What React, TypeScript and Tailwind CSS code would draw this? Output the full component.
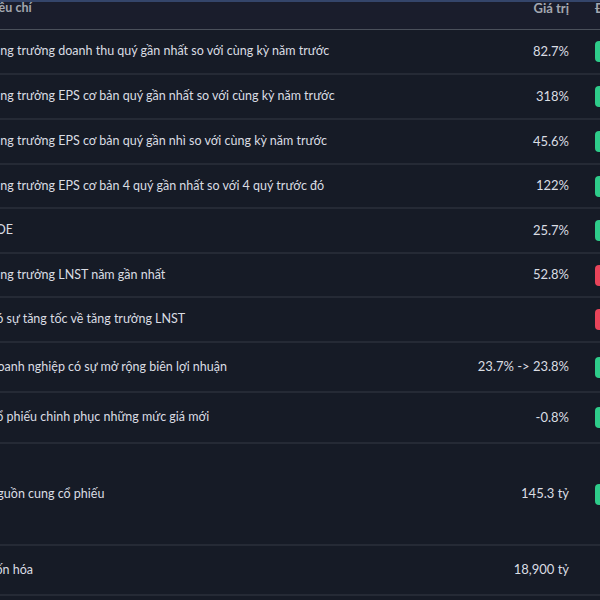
import React from "react";

type Row = { label: string; value: string; badge: "green" | "red" | null; h: string };

const rows: Row[] = [
  { label: "Tăng trưởng doanh thu quý gần nhất so với cùng kỳ năm trước", value: "82.7%", badge: "green", h: "h-[45px]" },
  { label: "Tăng trưởng EPS cơ bản quý gần nhất so với cùng kỳ năm trước", value: "318%", badge: "green", h: "h-[45px]" },
  { label: "Tăng trưởng EPS cơ bản quý gần nhì so với cùng kỳ năm trước", value: "45.6%", badge: "green", h: "h-[45px]" },
  { label: "Tăng trưởng EPS cơ bản 4 quý gần nhất so với 4 quý trước đó", value: "122%", badge: "green", h: "h-[44px]" },
  { label: "ROE", value: "25.7%", badge: "green", h: "h-[45px]" },
  { label: "Tăng trưởng LNST năm gần nhất", value: "52.8%", badge: "red", h: "h-[44px]" },
  { label: "Có sự tăng tốc về tăng trưởng LNST", value: "", badge: "red", h: "h-[45px]" },
  { label: "Doanh nghiệp có sự mở rộng biên lợi nhuận", value: "23.7% -> 23.8%", badge: "green", h: "h-[50px]" },
  { label: "Cổ phiếu chinh phục những mức giá mới", value: "-0.8%", badge: "green", h: "h-[51px]" },
  { label: "Nguồn cung cổ phiếu", value: "145.3 tỷ", badge: "green", h: "h-[102px]" },
  { label: "Vốn hóa", value: "18,900 tỷ", badge: null, h: "h-[50px]" },
];

export default function App() {
  return (
    <div
      className="w-[600px] h-[600px] overflow-hidden bg-[#161b26] text-[13px] text-[#dadde3]"
      style={{ fontFamily: "Lato, 'Noto Sans', sans-serif" }}
    >
      <div className="w-[700px] -ml-[20px] border-t-2 border-[#34456a]">
        <div className="flex h-[28px] bg-[#1a1d2c] border-b border-[#4b505b] font-bold text-[#a3a7b0]">
          <div className="w-[469px] pl-[8px] text-[12.5px] leading-[12px]">Tiêu chí</div>
          <div className="w-[120px] text-right leading-[12px]">Giá trị</div>
          <div className="w-[26px]" />
          <div className="w-[85px] leading-[12px]">Đánh giá</div>
        </div>
        {rows.map((r, i) => (
          <div key={i} className={`flex items-center ${r.h} border-b-2 border-[#252a35]`}>
            <div className="w-[469px] pl-[8px] whitespace-nowrap text-[12.5px]">{r.label}</div>
            <div className="w-[120px] text-right whitespace-nowrap">{r.value}</div>
            <div className="w-[26px]" />
            <div className="w-[85px]">
              {r.badge === "green" && <div className="w-[60px] h-[21px] rounded-[4px] bg-[#2ecc8a]" />}
              {r.badge === "red" && <div className="w-[60px] h-[21px] rounded-[4px] bg-[#e8445a]" />}
            </div>
          </div>
        ))}
      </div>
    </div>
  );
}
